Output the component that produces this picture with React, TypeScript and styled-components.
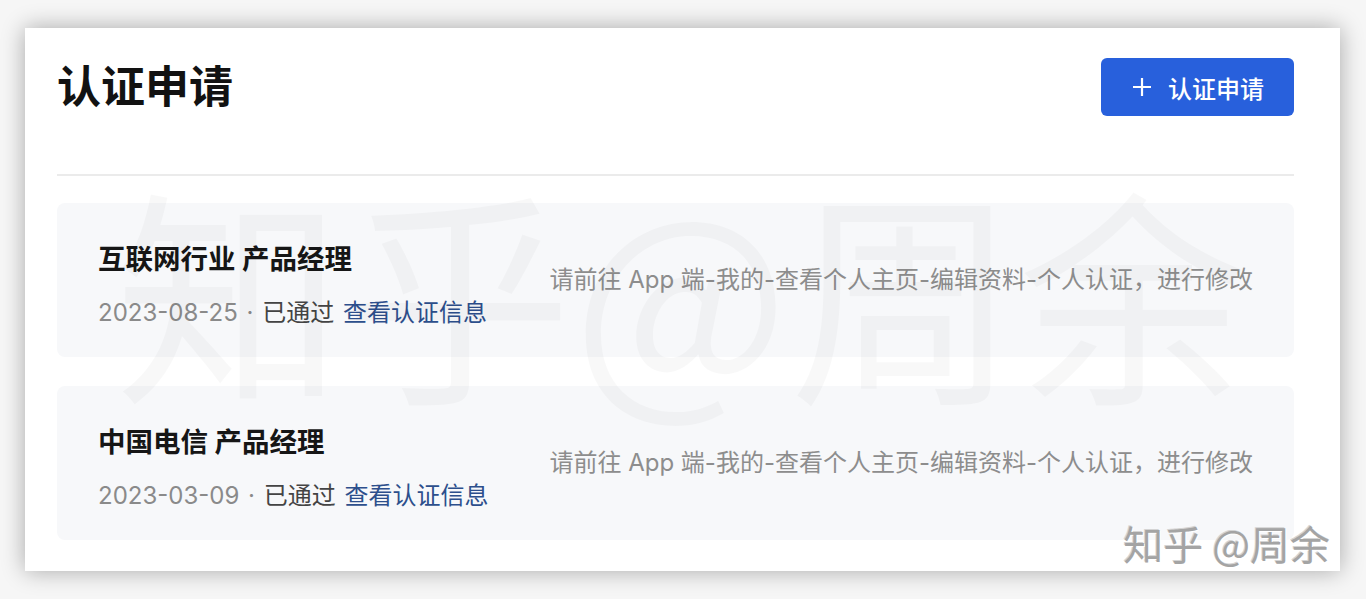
import styled, { createGlobalStyle } from 'styled-components';

const GlobalStyle = createGlobalStyle`
  html, body {
    margin: 0;
    padding: 0;
    background: #f6f6f6;
    font-family: Inter, "Noto Sans CJK SC", sans-serif;
  }
`;

const Page = styled.main`
  position: relative;
  width: 1366px;
  height: 599px;
  box-sizing: border-box;
  padding: 28px 26px 28px 25px;
  overflow: hidden;
`;

const Card = styled.section`
  position: relative;
  height: 543px;
  box-sizing: border-box;
  padding: 30px 46px 31px 32px;
  background: #fff;
  box-shadow: 0 0 22px rgba(0, 0, 0, 0.32);
  overflow: hidden;
`;

const Header = styled.header`
  display: flex;
  align-items: center;
  justify-content: space-between;
  height: 58px;
  padding-bottom: 58px;
  border-bottom: 2px solid #ebebeb;
`;

const Title = styled.h1`
  margin: 0;
  font-size: 44px;
  font-weight: 700;
  color: #121212;
  line-height: 1;
`;

const ApplyButton = styled.button`
  display: flex;
  align-items: center;
  gap: 16px;
  height: 58px;
  padding: 0 30px 0 31px;
  border: none;
  border-radius: 6px;
  background: #2860dc;
  color: #fff;
  font-family: inherit;
  font-size: 24px;
  font-weight: 500;
  cursor: pointer;
`;

const List = styled.ul`
  display: flex;
  flex-direction: column;
  gap: 29px;
  margin: 27px 0 0;
  padding: 0;
  list-style: none;
`;

const Item = styled.li`
  display: flex;
  align-items: center;
  justify-content: space-between;
  height: 154px;
  box-sizing: border-box;
  padding: 0 41px;
  background: #f7f8fa;
  border-radius: 8px;
`;

const ItemInfo = styled.div`
  display: flex;
  flex-direction: column;
  gap: 19px;
  padding-top: 10px;
`;

const ItemTitle = styled.div`
  font-size: 27.5px;
  font-weight: 700;
  line-height: 36px;
  color: #161616;
`;

const Meta = styled.div`
  font-size: 24px;
  line-height: 34px;
  color: #8a8a8a;
  word-spacing: 2px;
`;

const Status = styled.span`
  color: #444;
`;

const InfoLink = styled.a`
  color: #2d4f8c;
  text-decoration: none;
`;

const Hint = styled.p`
  margin: 0;
  font-size: 24px;
  line-height: 34px;
  color: #8d8d8d;
`;

const Watermark = styled.div`
  position: absolute;
  left: 90px;
  top: 146px;
  font-size: 228px;
  font-weight: 400;
  line-height: 1;
  letter-spacing: 1px;
  color: rgba(0, 0, 0, 0.026);
  white-space: nowrap;
  pointer-events: none;
  font-family: "Noto Sans CJK SC", sans-serif;
`;

const CornerMark = styled.div`
  position: absolute;
  right: 36px;
  bottom: 36px;
  font-size: 40px;
  line-height: 1;
  color: #a4a4a4;
  text-shadow: 1px 1px 0 #fff, -1px -1px 0 #d4d4d4;
  white-space: nowrap;
  pointer-events: none;
  font-family: "Noto Sans CJK SC", sans-serif;
`;

const PlusIcon = () => (
  <svg width="20" height="20" viewBox="0 0 20 20" fill="none">
    <path d="M10 1v18M1 10h18" stroke="#fff" strokeWidth="2.2" />
  </svg>
);

interface Certification {
  id: number;
  title: string;
  date: string;
}

const certifications: Certification[] = [
  { id: 1, title: '互联网行业 产品经理', date: '2023-08-25' },
  { id: 2, title: '中国电信 产品经理', date: '2023-03-09' },
];

const App = () => {
  return (
    <>
      <GlobalStyle />
      <Page>
        <Card>
          <Header>
            <Title>认证申请</Title>
            <ApplyButton>
              <PlusIcon />
              认证申请
            </ApplyButton>
          </Header>
          <List>
            {certifications.map((c) => (
              <Item key={c.id}>
                <ItemInfo>
                  <ItemTitle>{c.title}</ItemTitle>
                  <Meta>
                    {c.date} · <Status>已通过</Status> <InfoLink href="#">查看认证信息</InfoLink>
                  </Meta>
                </ItemInfo>
                <Hint>请前往 App 端-我的-查看个人主页-编辑资料-个人认证，进行修改</Hint>
              </Item>
            ))}
          </List>
          <Watermark>知乎@周余</Watermark>
        </Card>
        <CornerMark>知乎 @周余</CornerMark>
      </Page>
    </>
  );
};

export default App;
